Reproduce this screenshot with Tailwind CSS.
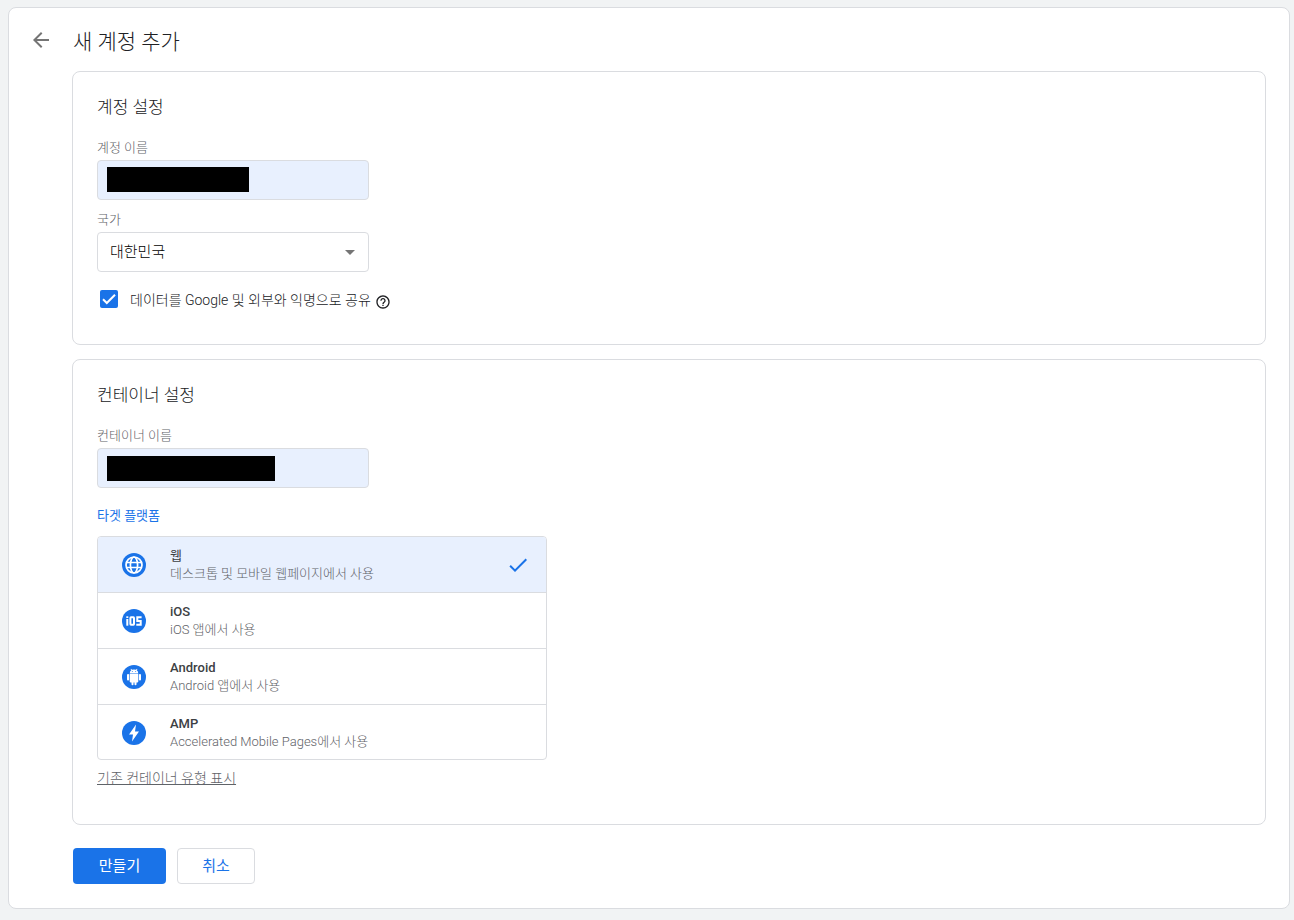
<!DOCTYPE html>
<html lang="ko">

<head>
    <meta charset="UTF-8">
    <meta name="viewport" content="width=device-width, initial-scale=1.0">
    <title>새 계정 추가</title>
    <!-- Tailwind CSS CDN -->
    <script src="https://cdn.jsdelivr.net/npm/@tailwindcss/browser@4"></script>
</head>

<body class="bg-[#f1f3f4] min-h-screen pt-[7px] pr-1 pb-2 pl-2 font-['Roboto','Noto_Sans_CJK_KR',sans-serif] text-[#3c4043]">
    <main class="bg-white border border-[#dadce0] rounded-lg pr-[23px] pb-6 pl-5">
        <header class="flex items-start gap-5 h-[63px] pt-5">
            <button type="button" aria-label="뒤로" class="w-6 h-6 cursor-pointer">
                <svg class="w-6 h-6 fill-[#757575]" viewBox="0 0 24 24">
                    <path d="M20 11H7.83l5.59-5.59L12 4l-8 8 8 8 1.41-1.41L7.83 13H20v-2z" />
                </svg>
            </button>
            <h1 class="text-[21px] leading-7 font-light text-[#202124]">새 계정 추가</h1>
        </header>

        <form class="ml-[43px]">
            <!-- Account -->
            <section class="border border-[#dadce0] rounded-lg px-6 pt-[23px] pb-[35px]">
                <h2 class="text-[17px] leading-6 font-light text-[#202124]">계정 설정</h2>

                <label for="account" class="block mt-[21px] text-[13px] leading-4 font-light text-[#5f6368]">계정 이름</label>
                <div class="relative mt-1 w-[272px]">
                    <input type="text" id="account"
                        class="block w-full h-10 px-3 border border-[#dadce0] rounded bg-[#e8f0fe] text-sm">
                    <span class="absolute left-[10px] top-[7px] w-[142px] h-[25px] bg-black"></span>
                </div>

                <label for="country" class="block mt-3 text-[13px] leading-4 font-light text-[#5f6368]">국가</label>
                <div class="relative mt-1 w-[272px]">
                    <select id="country"
                        class="block appearance-none w-full h-10 px-3 border border-[#dadce0] rounded bg-white text-[15px] font-light text-black">
                        <option>대한민국</option>
                    </select>
                    <svg class="absolute right-[14px] top-[18px] w-[10px] h-[5px] fill-[#757575] pointer-events-none" viewBox="0 0 10 5">
                        <path d="M0 0h10L5 5z" />
                    </svg>
                </div>

                <div class="flex items-start mt-[18px] pl-[3px] h-[19px]">
                    <div class="relative w-[18px] h-[18px]">
                        <input type="checkbox" id="share" checked
                            class="block appearance-none w-[18px] h-[18px] rounded-xs bg-[#1a73e8]">
                        <svg class="absolute inset-0 w-[18px] h-[18px] pointer-events-none" viewBox="0 0 18 18" fill="none" stroke="#fff" stroke-width="2">
                            <path d="M3 9.2l3.8 3.8L15 4.8" />
                        </svg>
                    </div>
                    <label for="share" class="ml-3 text-[14px] leading-5 font-light text-[#202124]">데이터를 Google 및 외부와 익명으로 공유</label>
                    <button type="button" aria-label="도움말" class="ml-1 mt-1 w-4 h-4">
                        <svg class="w-4 h-4 fill-[#202124]" viewBox="0 0 24 24">
                            <path d="M11 18h2v-2h-2v2zm1-16C6.48 2 2 6.48 2 12s4.48 10 10 10 10-4.480 10-10S17.520 2 12 2zm0 18c-4.410 0-8-3.590-8-8s3.590-8 8-8 8 3.590 8 8-3.590 8-8 8zm0-14c-2.210 0-4 1.790-4 4h2c0-1.100.9-2 2-2s2 .9 2 2c0 2-3 1.750-3 5h2c0-2.250 3-2.500 3-5 0-2.210-1.790-4-4-4z" />
                        </svg>
                    </button>
                </div>
            </section>

            <!-- Container -->
            <section class="mt-[14px] border border-[#dadce0] rounded-lg px-6 pt-[23px] pb-9">
                <h2 class="text-[17px] leading-6 font-light text-[#202124]">컨테이너 설정</h2>

                <label for="container" class="block mt-[21px] text-[13px] leading-4 font-light text-[#5f6368]">컨테이너 이름</label>
                <div class="relative mt-1 w-[272px]">
                    <input type="text" id="container"
                        class="block w-full h-10 px-3 border border-[#dadce0] rounded bg-[#e8f0fe] text-sm">
                    <span class="absolute left-[10px] top-2 w-[168px] h-[25px] bg-black"></span>
                </div>

                <fieldset class="mt-5">
                    <legend class="text-[13px] leading-4 text-[#1a73e8]">타겟 플랫폼</legend>
                    <div class="mt-3 max-w-[450px] border border-[#dadce0] rounded overflow-hidden">
                        <label class="flex items-center h-14 px-6 border-b border-[#dadce0] bg-[#e8f0fe]">
                            <input type="radio" name="platform" checked class="sr-only">
                            <svg class="w-6 h-6" viewBox="0 0 24 24" fill="none" stroke="#fff" stroke-width="1.7">
                                <circle cx="12" cy="12" r="12" fill="#1a73e8" stroke="none" />
                                <circle cx="12" cy="12" r="8" />
                                <ellipse cx="12" cy="12" rx="3.6" ry="8" />
                                <path d="M4.500 9.500h15M4.500 14.500h15" />
                            </svg>
                            <span class="flex-1 ml-6 text-[13px] leading-[18px]">
                                <span class="block">웹</span>
                                <span class="block font-light text-[#5f6368]">데스크톱 및 모바일 웹페이지에서 사용</span>
                            </span>
                            <svg class="w-6 h-6 -mr-2 fill-[#1a73e8]" viewBox="0 0 24 24">
                                <path d="M9 16.170L4.830 12l-1.420 1.410L9 19 21 7l-1.410-1.410z" />
                            </svg>
                        </label>
                        <label class="flex items-center h-14 px-6 border-b border-[#dadce0]">
                            <input type="radio" name="platform" class="sr-only">
                            <svg class="w-6 h-6" viewBox="0 0 24 24">
                                <circle cx="12" cy="12" r="12" fill="#1a73e8" />
                                <rect x="4.300" y="7.300" width="2" height="1.700" fill="#fff" />
                                <rect x="4.300" y="10" width="2" height="6.700" fill="#fff" />
                                <rect x="8.400" y="8.300" width="3.600" height="7.400" rx=".6" fill="none" stroke="#fff" stroke-width="2" />
                                <path d="M19.600 8.300h-4.300V12h3.400v3.700h-4.400" fill="none" stroke="#fff" stroke-width="2" />
                            </svg>
                            <span class="flex-1 ml-6 text-[13px] leading-[18px]">
                                <span class="block font-medium">iOS</span>
                                <span class="block font-light text-[#5f6368]">iOS 앱에서 사용</span>
                            </span>
                        </label>
                        <label class="flex items-center h-14 px-6 border-b border-[#dadce0]">
                            <input type="radio" name="platform" class="sr-only">
                            <svg class="w-6 h-6" viewBox="0 0 24 24">
                                <circle cx="12" cy="12" r="12" fill="#1a73e8" />
                                <g fill="#fff">
                                    <path d="M7.700 9h8.600v7.600a.8.8 0 0 1-.8.8h-1v1.800a1 1 0 0 1-2 0v-1.800h-1v1.800a1 1 0 0 1-2 0v-1.800h-1a.8.8 0 0 1-.8-.8z" />
                                    <path d="M7.700 8.500a4.300 4.300 0 0 1 1.700-3.400l-.9-.9.500-.5 1.200 1.100a4.300 4.300 0 0 1 3.600 0l1.200-1.100.5.500-.9.900a4.300 4.300 0 0 1 1.700 3.400z" />
                                    <rect x="5" y="9" width="2.100" height="6.600" rx="1" />
                                    <rect x="16.900" y="9" width="2.100" height="6.600" rx="1" />
                                </g>
                                <path d="M9.900 6.300h.9v.8h-.9zM13.200 6.300h.9v.8h-.9z" fill="#1a73e8" />
                            </svg>
                            <span class="flex-1 ml-6 text-[13px] leading-[18px]">
                                <span class="block font-medium">Android</span>
                                <span class="block font-light text-[#5f6368]">Android 앱에서 사용</span>
                            </span>
                        </label>
                        <label class="flex items-center h-[54px] pt-px px-6">
                            <input type="radio" name="platform" class="sr-only">
                            <svg class="w-6 h-6" viewBox="0 0 24 24">
                                <circle cx="12" cy="12" r="12" fill="#1a73e8" />
                                <path d="M14 3.600L7 13.400h4L10 20.400l7-9.900h-4z" fill="#fff" />
                            </svg>
                            <span class="flex-1 ml-6 text-[13px] leading-[18px]">
                                <span class="block font-medium">AMP</span>
                                <span class="block font-light text-[#5f6368]">Accelerated Mobile Pages에서 사용</span>
                            </span>
                        </label>
                    </div>
                </fieldset>

                <a href="#" class="block w-fit mt-2 text-[14px] leading-5 font-light text-[#5f6368] underline">기존 컨테이너 유형 표시</a>
            </section>

            <div class="flex gap-[11px] mt-[23px] pl-px">
                <button type="submit" class="h-9 w-[93px] rounded bg-[#1a73e8] text-[15px] text-white">만들기</button>
                <button type="button" class="h-9 w-[78px] rounded border border-[#dadce0] text-[15px] text-[#1a73e8]">취소</button>
            </div>
        </form>
    </main>
</body>

</html>
